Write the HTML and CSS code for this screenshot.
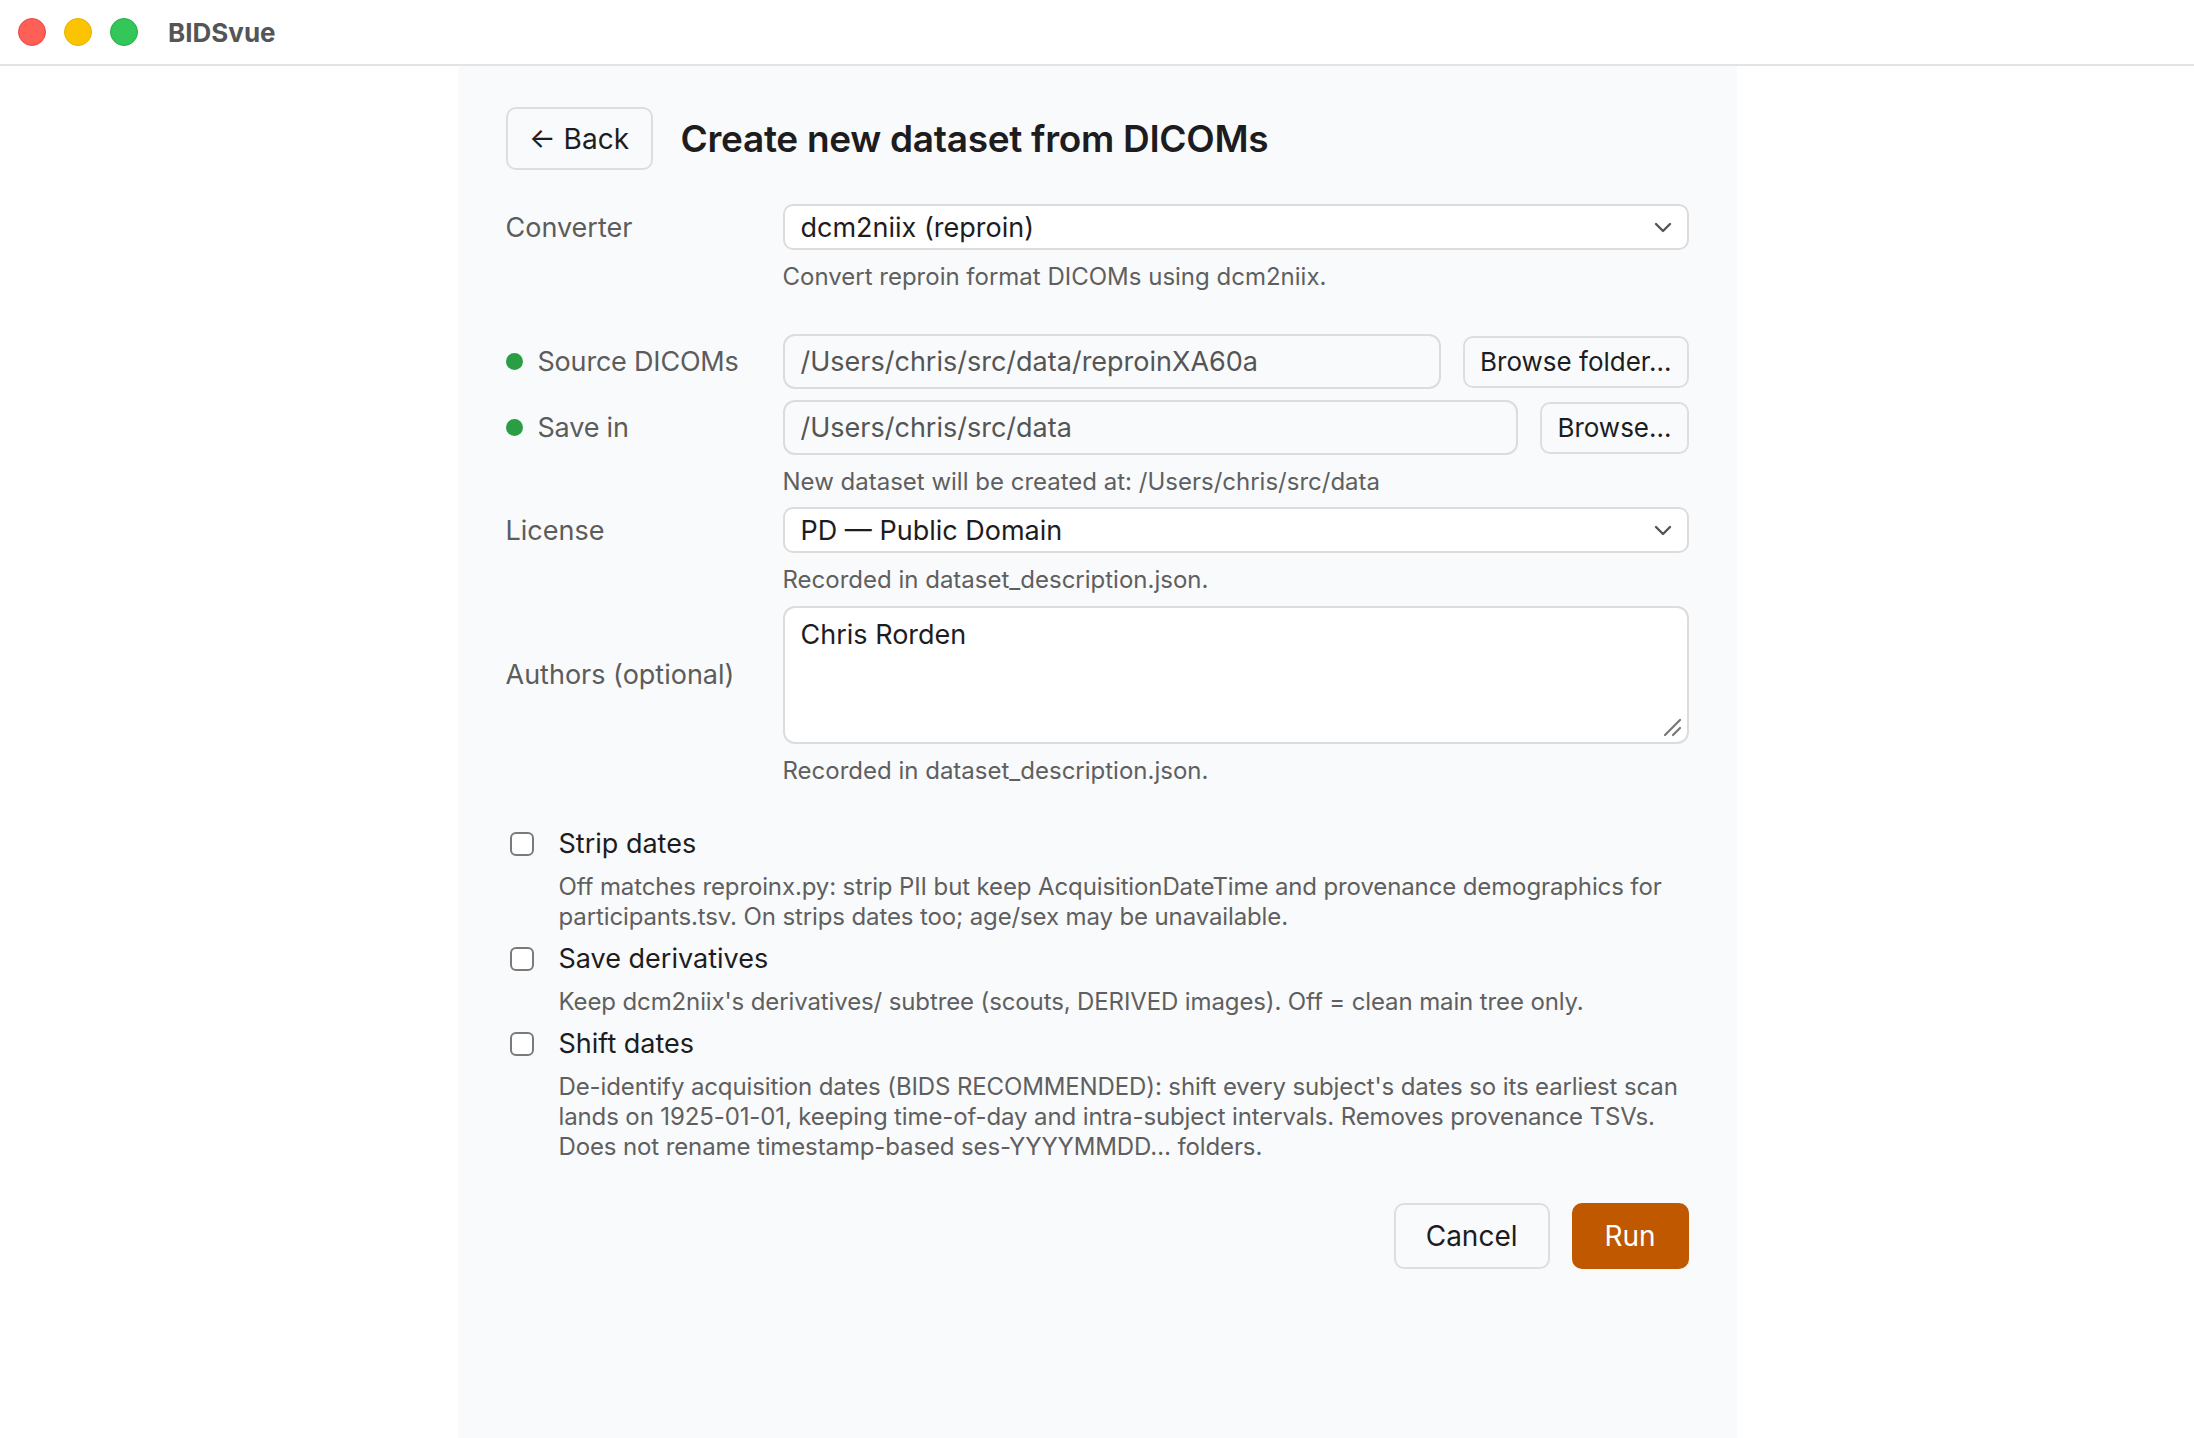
FILE: index.html
```html
<!DOCTYPE html>
<html lang="en">
<head>
  <meta charset="UTF-8" />
  <meta name="viewport" content="width=device-width, initial-scale=1" />
  <title>BIDSvue</title>
  <link rel="stylesheet" href="styles.css">
</head>
<body>
  <header class="titlebar">
    <div class="lights">
      <span class="light red"></span>
      <span class="light yellow"></span>
      <span class="light green"></span>
    </div>
    <span class="app-name">BIDSvue</span>
  </header>

  <main class="panel">
    <div class="page-head">
      <button class="btn back-btn" type="button">&larr; Back</button>
      <h1>Create new dataset from DICOMs</h1>
    </div>

    <form class="form">
      <div class="row">
        <label class="label">Converter</label>
        <div class="field">
          <div class="select-wrap">
            <select class="select">
              <option>dcm2niix (reproin)</option>
            </select>
            <svg class="chevron" width="18" height="12" viewBox="0 0 18 12"><path d="M2 3l7 7 7-7" fill="none" stroke="#555" stroke-width="2.4" stroke-linecap="round" stroke-linejoin="round"/></svg>
          </div>
          <p class="hint">Convert reproin format DICOMs using dcm2niix.</p>
        </div>
      </div>

      <div class="row row-source">
        <label class="label"><span class="dot"></span>Source DICOMs</label>
        <div class="field">
          <div class="path-line">
            <input class="path" type="text" value="/Users/chris/src/data/reproinXA60a" readonly />
            <button class="btn" type="button">Browse folder…</button>
          </div>
        </div>
      </div>

      <div class="row row-save">
        <label class="label"><span class="dot"></span>Save in</label>
        <div class="field">
          <div class="path-line">
            <input class="path" type="text" value="/Users/chris/src/data" readonly />
            <button class="btn" type="button">Browse…</button>
          </div>
          <p class="hint">New dataset will be created at: /Users/chris/src/data</p>
        </div>
      </div>

      <div class="row row-license">
        <label class="label">License</label>
        <div class="field">
          <div class="select-wrap">
            <select class="select">
              <option>PD — Public Domain</option>
            </select>
            <svg class="chevron" width="18" height="12" viewBox="0 0 18 12"><path d="M2 3l7 7 7-7" fill="none" stroke="#555" stroke-width="2.4" stroke-linecap="round" stroke-linejoin="round"/></svg>
          </div>
          <p class="hint">Recorded in dataset_description.json.</p>
        </div>
      </div>

      <div class="row row-authors">
        <label class="label label-mid">Authors (optional)</label>
        <div class="field">
          <div class="textarea-wrap">
            <textarea class="textarea">Chris Rorden</textarea>
            <svg class="grip" width="20" height="20" viewBox="0 0 20 20"><path d="M18 3L3 18M18 11l-7 7" stroke="#777" stroke-width="2.2" stroke-linecap="round"/></svg>
          </div>
          <p class="hint">Recorded in dataset_description.json.</p>
        </div>
      </div>

      <div class="options">
        <div class="option">
          <label class="check"><input type="checkbox" /> Strip dates</label>
          <p class="desc">Off matches reproinx.py: strip PII but keep AcquisitionDateTime and provenance demographics for participants.tsv. On strips dates too; age/sex may be unavailable.</p>
        </div>
        <div class="option">
          <label class="check"><input type="checkbox" /> Save derivatives</label>
          <p class="desc">Keep dcm2niix's derivatives/ subtree (scouts, DERIVED images). Off = clean main tree only.</p>
        </div>
        <div class="option">
          <label class="check"><input type="checkbox" /> Shift dates</label>
          <p class="desc">De-identify acquisition dates (BIDS RECOMMENDED): shift every subject's dates so its earliest scan lands on 1925-01-01, keeping time-of-day and intra-subject intervals. Removes provenance TSVs. Does not rename timestamp-based ses-YYYYMMDD… folders.</p>
        </div>
      </div>

      <div class="actions">
        <button class="btn btn-lg" type="button">Cancel</button>
        <button class="btn btn-lg btn-run" type="submit">Run</button>
      </div>
    </form>
  </main>
</body>
</html>
```

FILE: styles.css
```css
* {
  box-sizing: border-box;
}
body {
  margin: 0;
  font-family: Inter, "Noto Sans", sans-serif;
  color: #1d1d1f;
  background: #fff;
}

/* window title bar */
.titlebar {
  height: 66px;
  display: flex;
  align-items: center;
  padding-left: 18px;
  border-bottom: 2px solid #e3e3e3;
  background: #fff;
}
.lights {
  display: flex;
  gap: 18px;
}
.light {
  width: 28px;
  height: 28px;
  border-radius: 50%;
}
.red { background: #ff5f57; border: 1px solid #e9493f; }
.yellow { background: #fcc400; border: 1px solid #e5b000; }
.green { background: #33c659; border: 1px solid #1fb13f; }
.app-name {
  margin-left: 30px;
  font-size: 26px;
  font-weight: 700;
  color: #555;
}

.panel {
  width: 1279px;
  margin: 0 auto;
  min-height: 1372px;
  background: #f9fafb;
  padding: 41px 48px 40px;
}

.page-head {
  display: flex;
  align-items: center;
  gap: 28px;
  margin-bottom: 34px;
}
h1 {
  margin: 0;
  font-size: 37px;
  font-weight: 600;
  letter-spacing: -0.3px;
  color: #1d1d1f;
}

.btn {
  font-family: inherit;
  font-size: 26px;
  color: #1d1d1f;
  background: #f9fafb;
  border: 2px solid #dedede;
  border-radius: 10px;
  padding: 0 15px;
  height: 52px;
  cursor: pointer;
  white-space: nowrap;
}
.back-btn {
  height: 63px;
  width: 147px;
  font-size: 28px;
  padding: 0;
}

/* form rows */
.row {
  display: grid;
  grid-template-columns: 277px 1fr;
  align-items: start;
}
.label {
  display: flex;
  align-items: center;
  height: 46px;
  font-size: 27px;
  color: #5c5c5c;
}
.row-source .label,
.row-save .label {
  height: 55px;
  letter-spacing: -0.2px;
}
.row-authors {
  align-items: center;
}
.row-authors .label {
  margin-top: -44px;
}
.dot {
  width: 17px;
  height: 17px;
  border-radius: 50%;
  background: #2a9d45;
  margin-right: 15px;
}
.row-source {
  margin-top: 42px;
}
.row-save {
  margin-top: 11px;
}
.row-license {
  margin-top: 10px;
}
.row-authors {
  margin-top: 11px;
}

.hint {
  margin: 12px 0 0;
  font-size: 24px;
  line-height: 30px;
  color: #5f5f5f;
}

.select-wrap {
  position: relative;
}
.select {
  appearance: none;
  width: 100%;
  height: 46px;
  font-family: inherit;
  font-size: 27px;
  color: #1d1d1f;
  background: #fff;
  border: 2px solid #dcdcdc;
  border-radius: 10px;
  padding: 0 16px;
}
.chevron {
  position: absolute;
  right: 17px;
  top: 17px;
  pointer-events: none;
}

.path-line {
  display: flex;
  align-items: center;
  gap: 22px;
}
.path {
  flex: 1;
  height: 55px;
  font-family: inherit;
  font-size: 27px;
  color: #555;
  background: #f9fafb;
  border: 2px solid #dcdcdc;
  border-radius: 12px;
  padding: 0 16px;
}

.textarea-wrap {
  position: relative;
}
.textarea {
  display: block;
  width: 100%;
  height: 138px;
  resize: none;
  font-family: inherit;
  font-size: 27px;
  line-height: 34px;
  color: #1d1d1f;
  background: #fff;
  border: 2px solid #dcdcdc;
  border-radius: 12px;
  padding: 10px 16px;
}
.grip {
  position: absolute;
  right: 7px;
  bottom: 7px;
}

/* checkbox options */
.options {
  margin-top: 41px;
}
.option + .option {
  margin-top: 10px;
}
.check {
  display: flex;
  align-items: center;
  gap: 25px;
  font-size: 27px;
  line-height: 34px;
  color: #1d1d1f;
}
.check input {
  appearance: none;
  margin: 0 0 0 4px;
  width: 24px;
  height: 24px;
  border: 2px solid #7a7a7a;
  border-radius: 6px;
  background: #fff;
}
.desc {
  margin: 11px 0 0 53px;
  font-size: 24px;
  line-height: 30px;
  letter-spacing: -0.12px;
  color: #5f5f5f;
}

.actions {
  display: flex;
  justify-content: flex-end;
  gap: 22px;
  margin-top: 41px;
}
.btn-lg {
  height: 66px;
  font-size: 28px;
  padding: 0 30px;
  min-width: 117px;
}
.btn-run {
  background: #c05800;
  border-color: #c05800;
  color: #fff;
}
```
